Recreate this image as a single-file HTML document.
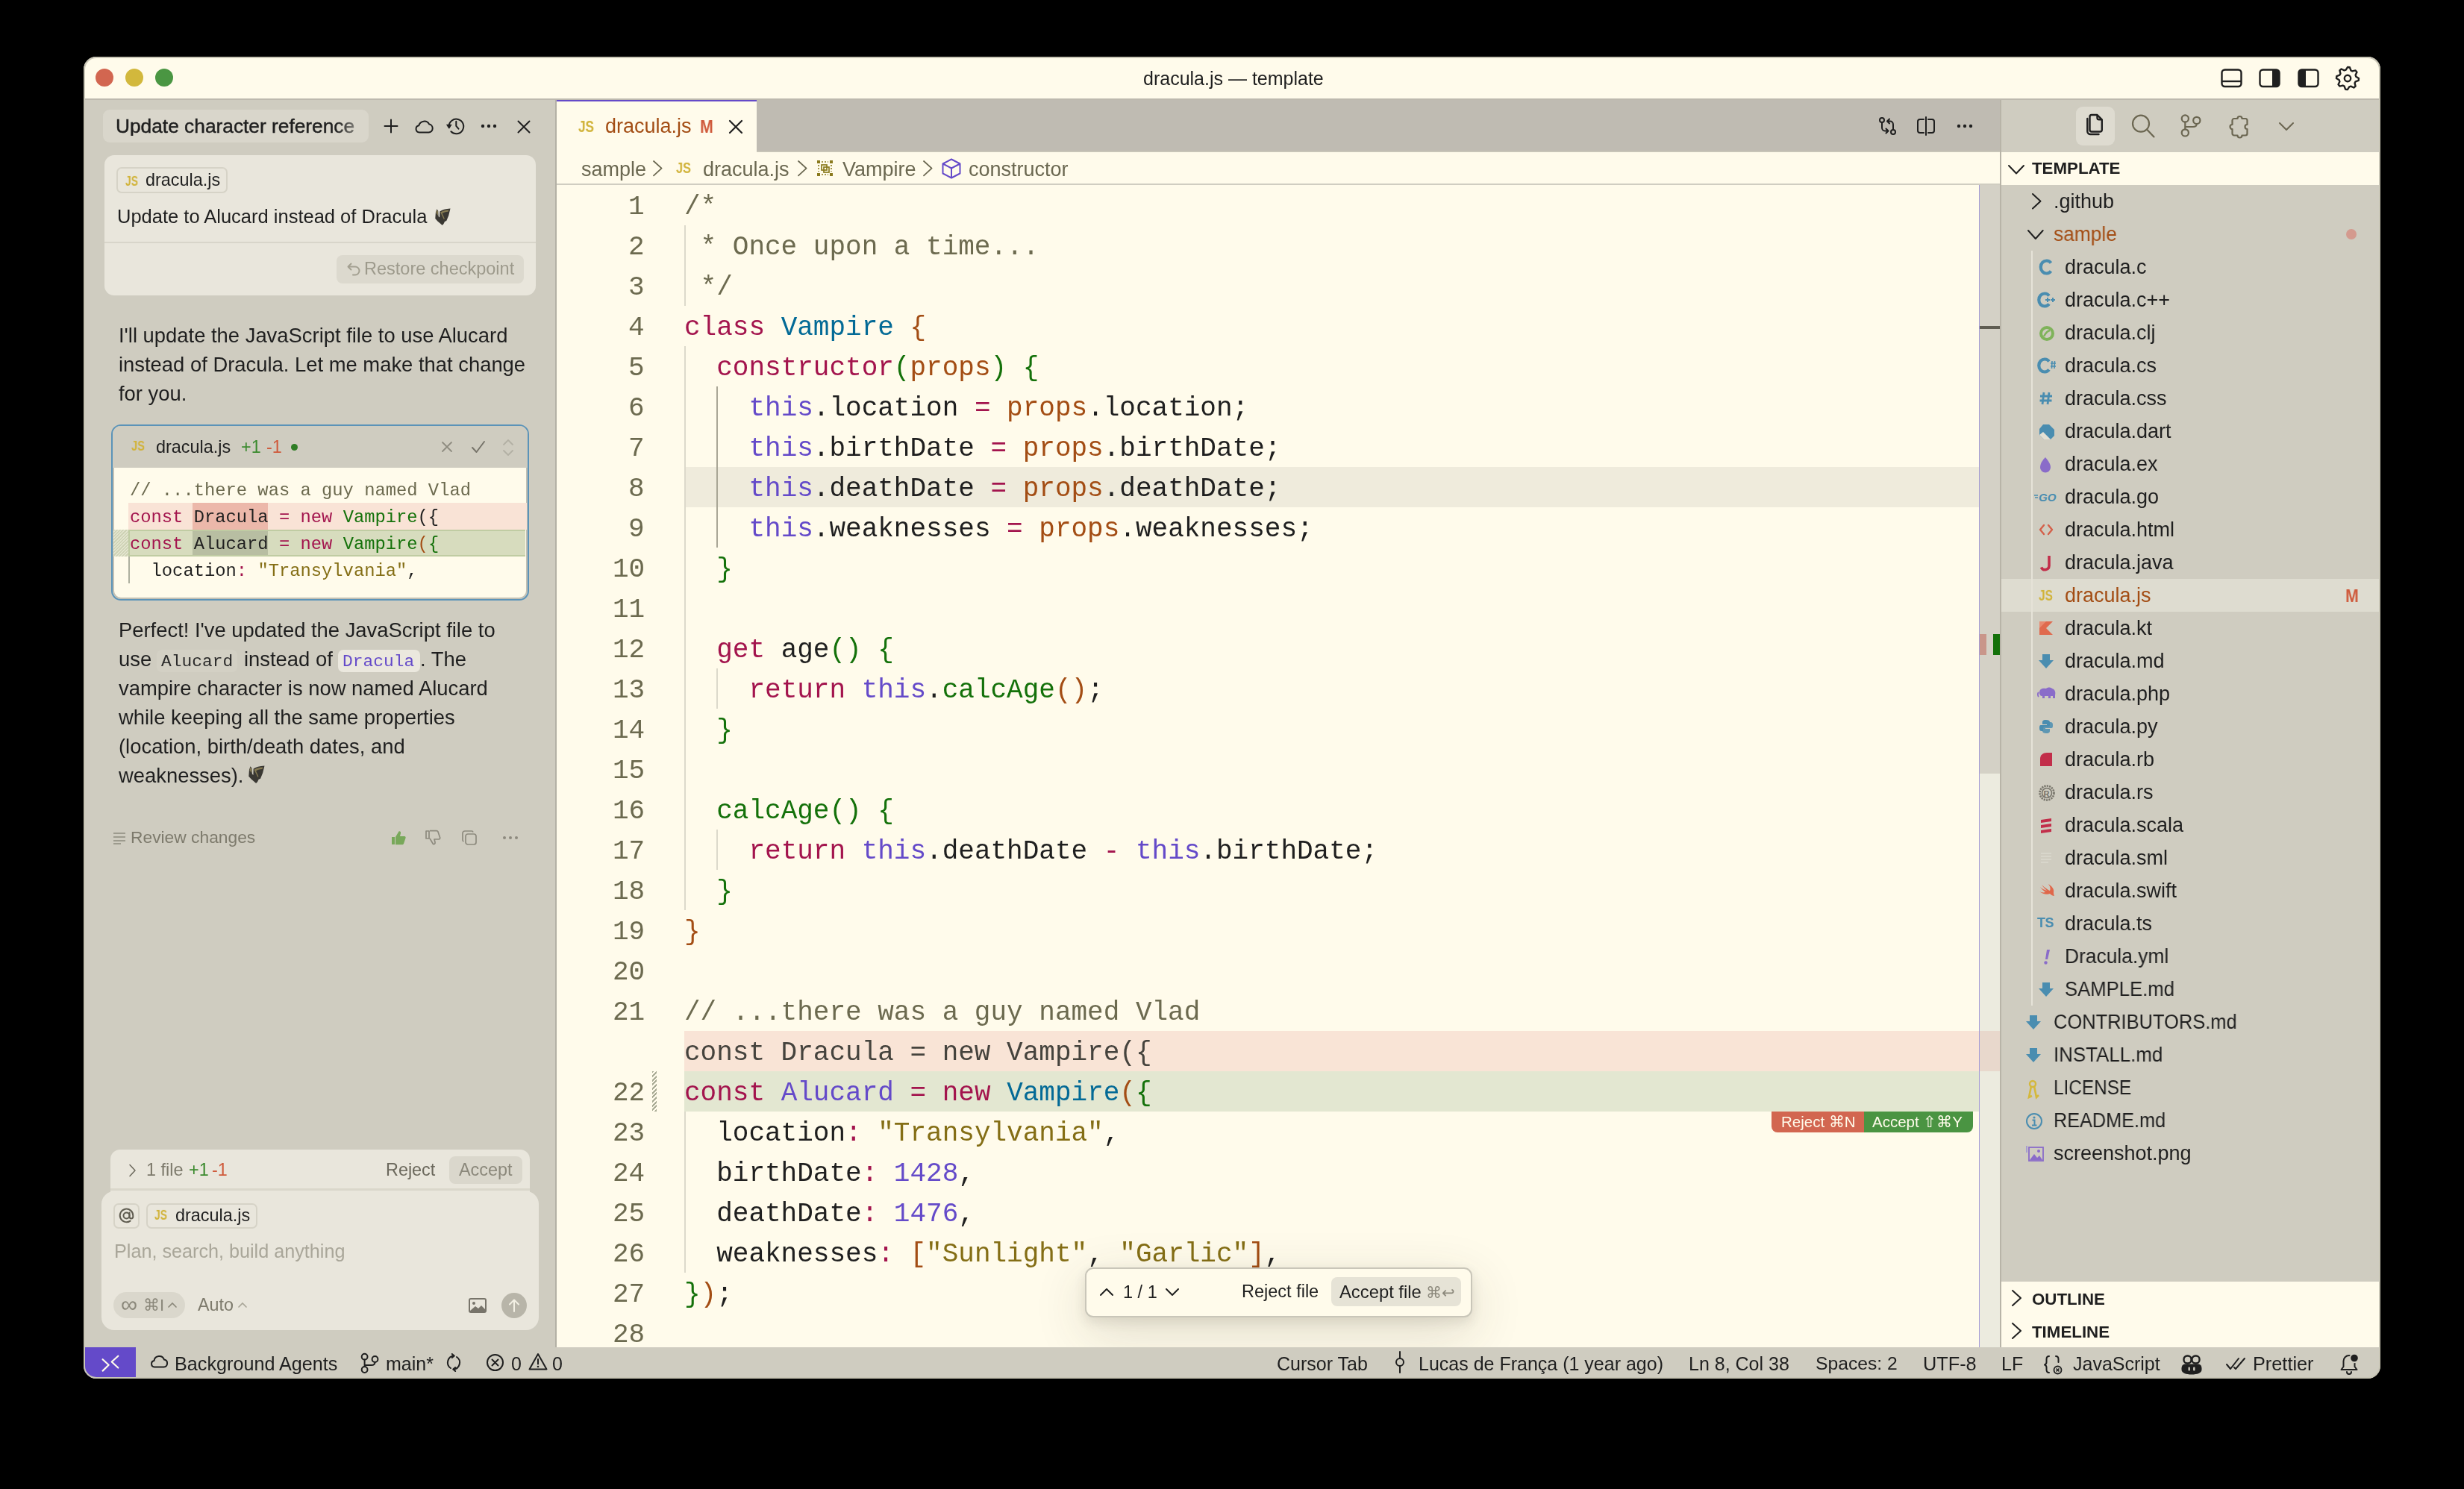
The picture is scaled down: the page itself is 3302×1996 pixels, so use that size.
<!DOCTYPE html>
<html><head><meta charset="utf-8">
<style>
html,body{margin:0;padding:0;background:#000;width:3302px;height:1996px;overflow:hidden;}
body{font-family:"Liberation Sans", sans-serif;-webkit-font-smoothing:antialiased;}
.t{position:absolute;white-space:pre;will-change:transform;}
.r{position:absolute;}
.s{position:absolute;overflow:visible;}
#win{position:absolute;left:112px;top:76px;width:3078px;height:1772px;border-radius:20px;overflow:hidden;background:#cfccc0;}
#win > div, #win > svg {}
</style></head><body>
<div class="r" style="left:112px;top:76px;width:3078px;height:1772px;background:#cfccc0;"></div>
<div class="r" style="left:112px;top:76px;width:3078px;height:56px;background:#fffbeb;"></div>
<div class="r" style="left:112px;top:132px;width:3078px;height:2px;background:#bdb9ae;"></div>
<div class="r" style="left:128px;top:92px;width:24px;height:24px;border-radius:50%;background:#d26650"></div>
<div class="r" style="left:168px;top:92px;width:24px;height:24px;border-radius:50%;background:#d2b83c"></div>
<div class="r" style="left:208px;top:92px;width:24px;height:24px;border-radius:50%;background:#4a9642"></div>
<div class="t" style="left:1532.0px;top:92.6px;font-size:25px;line-height:25px;color:#1f1f1f;">dracula.js — template</div>
<div class="r" style="left:744px;top:134px;width:2px;height:1672px;background:#b3b0a5;"></div>
<div class="r" style="left:138px;top:147px;width:356px;height:44px;border-radius:9px;background:#d9d6cb"></div>
<div class="t" style="left:155px;top:156.4px;font-size:26.3px;line-height:26px;color:#1f1f1f;width:335px;overflow:hidden;-webkit-text-stroke:0.45px #1f1f1f;-webkit-mask-image:linear-gradient(90deg,#000 88%,rgba(0,0,0,0.25) 100%)">Update character reference</div>
<svg class="s" style="left:512px;top:157px;" width="24" height="24" viewBox="0 0 24 24"><path d="M12 3.5 V20.5 M3.5 12 H20.5" stroke="#1f1f1f" stroke-width="2" fill="none" stroke-linecap="round" stroke-linejoin="round"/></svg>
<svg class="s" style="left:554px;top:157px;" width="28" height="24" viewBox="0 0 28 24"><path d="M8 20.5 H20.5 A5.5 5.5 0 0 0 21.2 9.6 A7.5 7.5 0 0 0 7.3 11.2 A4.7 4.7 0 0 0 8 20.5 Z" stroke="#1f1f1f" stroke-width="2" fill="none" stroke-linecap="round" stroke-linejoin="round"/></svg>
<svg class="s" style="left:598px;top:157px;" width="26" height="24" viewBox="0 0 26 24"><path d="M3.6 12.5 A9.8 9.8 0 1 1 6.4 19.3" stroke="#1f1f1f" stroke-width="2" fill="none" stroke-linecap="round" stroke-linejoin="round"/><path d="M0.6 10.2 L7 10.2 L3.8 15.2 Z" fill="#1f1f1f" stroke="#1f1f1f" stroke-width="1" stroke-linejoin="round"/><path d="M13.3 5.8 V11.8 L16.5 15.7" stroke="#1f1f1f" stroke-width="2" fill="none" stroke-linecap="round" stroke-linejoin="round"/></svg>
<svg class="s" style="left:644px;top:163px;" width="24" height="12" viewBox="0 0 24 12"><circle cx="3" cy="6" r="2.2" fill="#1f1f1f"/><circle cx="11" cy="6" r="2.2" fill="#1f1f1f"/><circle cx="19" cy="6" r="2.2" fill="#1f1f1f"/></svg>
<svg class="s" style="left:692px;top:160px;" width="20" height="20" viewBox="0 0 20 20"><path d="M2.5 2.5 L17.5 17.5 M17.5 2.5 L2.5 17.5" stroke="#1f1f1f" stroke-width="2" fill="none" stroke-linecap="round" stroke-linejoin="round"/></svg>
<div class="r" style="left:140px;top:208px;width:578px;height:188px;border-radius:13px;background:#e9e6dc"></div>
<div class="r" style="left:140px;top:324px;width:578px;height:2px;background:#d8d5ca;"></div>
<div class="r" style="left:156px;top:224px;width:145px;height:31px;border:2px solid #d6d3c7;border-radius:7px"></div>
<div class="t" style="left:167.5px;top:235.4px;font-size:16px;line-height:16px;font-weight:700;color:#d1b33a;letter-spacing:0px;transform:scale(0.86,1.1);transform-origin:0 0">JS</div>
<div class="t" style="left:194.6px;top:229.9px;font-size:23.4px;line-height:23.4px;color:#1f1f1f;">dracula.js</div>
<div class="t" style="left:157.0px;top:277.6px;font-size:25.5px;line-height:25.5px;color:#1f1f1f;">Update to Alucard instead of Dracula</div>
<svg class="s" style="left:582px;top:279px;" width="23" height="23" viewBox="0 0 23 23"><g transform="scale(1.045)"><path d="M1.2 13.5 L1.8 5.5 L3.2 1.2 L5 3.5 L5.4 10.5 L6.8 12 L7 4.2 C10 2.2 14.5 0.9 20.6 0.5 L19.6 4.5 L18.4 9.5 L15.6 16.2 L13.4 17.2 L12 20.2 L10.2 22 L7.6 19.6 L4.4 17 Z" fill="#3a3833"/><path d="M2.2 6 L3.3 2.2 L4.6 4.2 L4.8 9.5 Z" fill="#857a52"/><path d="M7.8 5.2 C11 3.4 15 2.4 18.6 2.4 L17.8 4.6 C14.5 4.6 11.8 5.6 10.2 6.8 L13.2 13.5 L12.4 14.6 Z" fill="#857a52"/></g></svg>
<div class="r" style="left:451px;top:342px;width:251px;height:38px;border-radius:8px;background:#dcd9ce"></div>
<svg class="s" style="left:462px;top:349px;" width="24" height="24" viewBox="0 0 24 24"><path d="M5 8.5 H14 A5.5 5.5 0 0 1 14 19.5 H11" stroke="#a3a091" stroke-width="2" fill="none" stroke-linecap="round" stroke-linejoin="round"/><path d="M8.5 4.5 L4.5 8.5 L8.5 12.5" stroke="#a3a091" stroke-width="2" fill="none" stroke-linecap="round" stroke-linejoin="round"/></svg>
<div class="t" style="left:488.4px;top:348.7px;font-size:23.5px;line-height:23.5px;color:#9d9a8c;">Restore checkpoint</div>
<div class="t" style="left:159.0px;top:435.8px;font-size:27.4px;line-height:27.4px;color:#1f1f1f;">I&#x27;ll update the JavaScript file to use Alucard</div>
<div class="t" style="left:159.0px;top:474.8px;font-size:27.4px;line-height:27.4px;color:#1f1f1f;">instead of Dracula. Let me make that change</div>
<div class="t" style="left:159.0px;top:513.8px;font-size:27.4px;line-height:27.4px;color:#1f1f1f;">for you.</div>
<div class="r" style="left:149px;top:569px;width:556px;height:232px;border:2px solid #5b93b8;border-radius:13px;background:#fffbeb;overflow:hidden;box-shadow:inset 0 0 0 2px #c3c0b4"><div style="position:absolute;left:0;top:0;right:0;height:56px;background:#cfccc0"></div></div>
<div class="t" style="left:175.5px;top:588.3px;font-size:17px;line-height:17px;font-weight:700;color:#d1b33a;letter-spacing:0px;transform:scale(0.86,1.1);transform-origin:0 0">JS</div>
<div class="t" style="left:208.7px;top:588.2px;font-size:23.4px;line-height:23.4px;color:#1f1f1f;">dracula.js</div>
<div class="t" style="left:323.0px;top:588.2px;font-size:23.4px;line-height:23.4px;color:#3b8a2e;">+1</div>
<div class="t" style="left:357.0px;top:588.2px;font-size:23.4px;line-height:23.4px;color:#cf5a3b;">-1</div>
<div class="r" style="left:390px;top:595px;width:9px;height:9px;border-radius:50%;background:#2f7d25"></div>
<svg class="s" style="left:589px;top:589px;" width="20" height="20" viewBox="0 0 20 20"><path d="M4 4 L16 16 M16 4 L4 16" stroke="#8f8c80" stroke-width="1.8" fill="none" stroke-linecap="round" stroke-linejoin="round"/></svg>
<svg class="s" style="left:629px;top:587px;" width="24" height="24" viewBox="0 0 24 24"><path d="M4 13 L9.5 19 L20 5" stroke="#77746a" stroke-width="2" fill="none" stroke-linecap="round" stroke-linejoin="round"/></svg>
<svg class="s" style="left:671px;top:587px;" width="20" height="26" viewBox="0 0 20 26"><path d="M4 9 L10 3 L16 9 M4 17 L10 23 L16 17" stroke="#b3b0a4" stroke-width="1.8" fill="none" stroke-linecap="round" stroke-linejoin="round"/></svg>
<div class="r" style="left:172px;top:674px;width:534px;height:36px;background:#f9e3d6;"></div>
<div class="r" style="left:258px;top:674px;width:101px;height:36px;background:#ecb8aa;"></div>
<div class="r" style="left:172px;top:710px;width:530px;height:32px;background:#d7dcbe;border:2px solid #c0cca3;border-right:none"></div>
<div class="r" style="left:152px;top:710px;width:20px;height:36px;background:repeating-linear-gradient(135deg,#cfd3b6 0 1.5px,#e3e5cf 1.5px 3px)"></div>
<div class="r" style="left:258px;top:712px;width:101px;height:32px;background:#b8bea2;"></div>
<div class="r" style="left:172px;top:746px;width:2px;height:36px;background:#aeb09f;"></div>
<div class="t" style="left:173.6px;top:645.8px;font-size:23.8px;line-height:23.8px;color:#1f1f1f;font-family:'Liberation Mono',monospace;"><span style="color:#6c6a4f">// ...there was a guy named Vlad</span></div>
<div class="t" style="left:173.6px;top:681.8px;font-size:23.8px;line-height:23.8px;color:#1f1f1f;font-family:'Liberation Mono',monospace;"><span style="color:#a3144d">const</span><span style="color:#1f1f1f"> Dracula </span><span style="color:#a3144d">=</span><span style="color:#1f1f1f"> </span><span style="color:#a3144d">new</span><span style="color:#1f1f1f"> </span><span style="color:#14710a">Vampire</span><span style="color:#1f1f1f">({</span></div>
<div class="t" style="left:173.6px;top:717.8px;font-size:23.8px;line-height:23.8px;color:#1f1f1f;font-family:'Liberation Mono',monospace;"><span style="color:#a3144d">const</span><span style="color:#1f1f1f"> Alucard </span><span style="color:#a3144d">=</span><span style="color:#1f1f1f"> </span><span style="color:#a3144d">new</span><span style="color:#1f1f1f"> </span><span style="color:#14710a">Vampire</span><span style="color:#a34d14">(</span><span style="color:#14710a">{</span></div>
<div class="t" style="left:173.6px;top:753.8px;font-size:23.8px;line-height:23.8px;color:#1f1f1f;font-family:'Liberation Mono',monospace;"><span style="color:#1f1f1f">  location</span><span style="color:#a3144d">:</span><span style="color:#1f1f1f"> </span><span style="color:#846e15">&quot;Transylvania&quot;</span><span style="color:#1f1f1f">,</span></div>
<div class="t" style="left:159.0px;top:830.8px;font-size:27.4px;line-height:27.4px;color:#1f1f1f;">Perfect! I&#x27;ve updated the JavaScript file to</div>
<div class="t" style="left:159.0px;top:908.8px;font-size:27.4px;line-height:27.4px;color:#1f1f1f;">vampire character is now named Alucard</div>
<div class="t" style="left:159.0px;top:947.8px;font-size:27.4px;line-height:27.4px;color:#1f1f1f;">while keeping all the same properties</div>
<div class="t" style="left:159.0px;top:986.8px;font-size:27.4px;line-height:27.4px;color:#1f1f1f;">(location, birth/death dates, and</div>
<div class="t" style="left:159.0px;top:1025.8px;font-size:27.4px;line-height:27.4px;color:#1f1f1f;">weaknesses).</div>
<div class="t" style="left:159.0px;top:869.8px;font-size:27.4px;line-height:27.4px;color:#1f1f1f;">use</div>
<div class="r" style="left:210px;top:871px;width:108px;height:30px;border-radius:7px;background:#d3d0c4"></div>
<div class="t" style="left:215.5px;top:875.5px;font-size:22.9px;line-height:22.9px;color:#2a2a2a;font-family:'Liberation Mono',monospace;">Alucard</div>
<div class="t" style="left:327.0px;top:869.8px;font-size:27.4px;line-height:27.4px;color:#1f1f1f;">instead of</div>
<div class="r" style="left:453px;top:871px;width:110px;height:30px;border-radius:7px;background:#ebe8de"></div>
<div class="t" style="left:458.5px;top:875.5px;font-size:22.9px;line-height:22.9px;color:#644ac9;font-family:'Liberation Mono',monospace;">Dracula</div>
<div class="t" style="left:562.5px;top:869.8px;font-size:27.4px;line-height:27.4px;color:#1f1f1f;">. The</div>
<svg class="s" style="left:332px;top:1026px;" width="24" height="24" viewBox="0 0 24 24"><g transform="scale(1.091)"><path d="M1.2 13.5 L1.8 5.5 L3.2 1.2 L5 3.5 L5.4 10.5 L6.8 12 L7 4.2 C10 2.2 14.5 0.9 20.6 0.5 L19.6 4.5 L18.4 9.5 L15.6 16.2 L13.4 17.2 L12 20.2 L10.2 22 L7.6 19.6 L4.4 17 Z" fill="#3a3833"/><path d="M2.2 6 L3.3 2.2 L4.6 4.2 L4.8 9.5 Z" fill="#857a52"/><path d="M7.8 5.2 C11 3.4 15 2.4 18.6 2.4 L17.8 4.6 C14.5 4.6 11.8 5.6 10.2 6.8 L13.2 13.5 L12.4 14.6 Z" fill="#857a52"/></g></svg>
<svg class="s" style="left:150px;top:1114px;" width="20" height="18" viewBox="0 0 20 18"><path d="M2 3 H18 M2 8 H18 M2 13 H18 M2 17 H12" stroke="#8d8a7e" stroke-width="1.6" fill="none"/></svg>
<div class="t" style="left:175.0px;top:1110.7px;font-size:22.8px;line-height:22.8px;color:#7d7a6c;">Review changes</div>
<svg class="s" style="left:522px;top:1111px;" width="24" height="24" viewBox="0 0 24 24"><path d="M3 11 H7 V21 H3 Z" fill="#78a85a"/><path d="M8 11 L12.5 3.5 C14 3 15.5 4 15 6 L14 10 H20 C21.5 10 22 11.5 21.5 12.5 L19 20 C18.5 21 17.8 21.3 17 21.3 H8 Z" fill="#78a85a"/></svg>
<svg class="s" style="left:568px;top:1111px;" width="24" height="24" viewBox="0 0 24 24"><path d="M7 13 V3 H3 V13 Z M8 13 L12.5 20.5 C14 21 15.5 20 15 18 L14 14 H20 C21.5 14 22 12.5 21.5 11.5 L19 4 C18.5 3 17.8 2.7 17 2.7 H8" stroke="#8d8a7e" stroke-width="1.7" fill="none" stroke-linejoin="round"/></svg>
<svg class="s" style="left:617px;top:1111px;" width="24" height="24" viewBox="0 0 24 24"><rect x="7" y="7" width="14" height="14" rx="3" stroke="#8d8a7e" stroke-width="1.7" fill="none"/><path d="M17 4.5 A2 2 0 0 0 15 3 H6 A3 3 0 0 0 3 6 V15 A2 2 0 0 0 4.5 17" stroke="#8d8a7e" stroke-width="1.7" fill="none"/></svg>
<svg class="s" style="left:673px;top:1117px;" width="24" height="12" viewBox="0 0 24 12"><circle cx="3" cy="6" r="2" fill="#8d8a7e"/><circle cx="11" cy="6" r="2" fill="#8d8a7e"/><circle cx="19" cy="6" r="2" fill="#8d8a7e"/></svg>
<div class="r" style="left:148px;top:1541px;width:562px;height:60px;border-radius:13px 13px 0 0;background:#e9e6dc"></div>
<div class="r" style="left:148px;top:1593px;width:562px;height:3px;background:#dad7cb;"></div>
<svg class="s" style="left:171px;top:1559px;" width="16" height="20" viewBox="0 0 16 20"><path d="M3 2.5 L10 10 L3 17.5" stroke="#6b685c" stroke-width="1.5" fill="none" stroke-linecap="round" stroke-linejoin="round"/></svg>
<div class="t" style="left:195.7px;top:1557.0px;font-size:23.4px;line-height:23.4px;color:#7d7a6c;">1 file</div>
<div class="t" style="left:253.0px;top:1557.0px;font-size:23.4px;line-height:23.4px;color:#3b8a2e;">+1</div>
<div class="t" style="left:284.0px;top:1557.0px;font-size:23.4px;line-height:23.4px;color:#cf5a3b;">-1</div>
<div class="t" style="left:516.5px;top:1557.0px;font-size:23.4px;line-height:23.4px;color:#6b685c;">Reject</div>
<div class="r" style="left:602px;top:1550px;width:98px;height:37px;border-radius:8px;background:#dad7cc"></div>
<div class="t" style="left:615.0px;top:1557.0px;font-size:23.4px;line-height:23.4px;color:#8b887b;">Accept</div>
<div class="r" style="left:136px;top:1597px;width:586px;height:186px;border-radius:17px;background:#e9e6dc"></div>
<div class="r" style="left:152px;top:1613px;width:31px;height:30px;border:2px solid #d6d3c7;border-radius:7px"></div>
<svg class="s" style="left:159px;top:1619px;" width="22" height="22" viewBox="0 0 22 22"><circle cx="10.5" cy="10.5" r="4" stroke="#5f5c50" stroke-width="2" fill="none"/><path d="M14.5 6.5 V12 A2.4 2.4 0 0 0 19.3 12 V10.5 A8.8 8.8 0 1 0 15.6 17.6" stroke="#5f5c50" stroke-width="2" fill="none" stroke-linecap="round"/></svg>
<div class="r" style="left:196px;top:1613px;width:145px;height:30px;border:2px solid #d6d3c7;border-radius:7px"></div>
<div class="t" style="left:206.5px;top:1621.4px;font-size:16px;line-height:16px;font-weight:700;color:#d1b33a;letter-spacing:0px;transform:scale(0.86,1.1);transform-origin:0 0">JS</div>
<div class="t" style="left:234.7px;top:1617.5px;font-size:23.4px;line-height:23.4px;color:#1f1f1f;">dracula.js</div>
<div class="t" style="left:153.0px;top:1665.3px;font-size:25.2px;line-height:25.2px;color:#a9a699;">Plan, search, build anything</div>
<div class="r" style="left:152px;top:1732px;width:96px;height:35px;border-radius:18px;background:#dad7cc"></div>
<div class="t" style="left:162.0px;top:1733.3px;font-size:31px;line-height:31px;color:#8b887b;">∞</div>
<div class="t" style="left:192.0px;top:1739.4px;font-size:22px;line-height:22px;color:#8b887b;">⌘I</div>
<svg class="s" style="left:223px;top:1743px;" width="16" height="12" viewBox="0 0 16 12"><path d="M3 9 L8 4 L13 9" stroke="#8b887b" stroke-width="1.7" fill="none" stroke-linecap="round"/></svg>
<div class="t" style="left:264.5px;top:1738.3px;font-size:23.3px;line-height:23.3px;color:#7d7a6c;">Auto</div>
<svg class="s" style="left:317px;top:1743px;" width="16" height="12" viewBox="0 0 16 12"><path d="M3 9 L8 4 L13 9" stroke="#a9a699" stroke-width="1.7" fill="none" stroke-linecap="round"/></svg>
<svg class="s" style="left:627px;top:1739px;" width="26" height="22" viewBox="0 0 26 22"><rect x="2" y="2" width="22" height="18" rx="2" stroke="#77746a" stroke-width="2" fill="none"/><circle cx="8" cy="8" r="2" fill="#77746a"/><path d="M3 18 L10 12 L14 15 L18 11 L23 16 V19 H3 Z" fill="#77746a"/></svg>
<div class="r" style="left:672px;top:1733px;width:34px;height:34px;border-radius:50%;background:#b8b5a9"></div>
<svg class="s" style="left:675px;top:1736px;" width="28" height="28" viewBox="0 0 28 28"><path d="M14 22 V7 M8 12.5 L14 6.5 L20 12.5" stroke="#f3f0e4" stroke-width="2" fill="none" stroke-linecap="round" stroke-linejoin="round"/></svg>
<div class="r" style="left:746px;top:134px;width:1935px;height:68px;background:#bfbbb2;"></div>
<div class="r" style="left:746px;top:202px;width:1935px;height:2px;background:#c8c5b8;"></div>
<div class="r" style="left:746px;top:134px;width:268px;height:70px;background:#fffbeb;"></div>
<div class="r" style="left:746px;top:134px;width:268px;height:2px;background:#644ac9;"></div>
<div class="r" style="left:746px;top:204px;width:1935px;height:42px;background:#fffbeb;"></div>
<div class="r" style="left:746px;top:246px;width:1935px;height:2px;background:#d0cdc1;"></div>
<div class="r" style="left:746px;top:248px;width:1935px;height:1558px;background:#fffbeb;"></div>
<div class="t" style="left:775.0px;top:157.8px;font-size:20px;line-height:20px;font-weight:700;color:#d1b33a;letter-spacing:0px;transform:scale(0.86,1.1);transform-origin:0 0">JS</div>
<div class="t" style="left:811.0px;top:156.4px;font-size:27px;line-height:27px;color:#a34d14;">dracula.js</div>
<div class="t" style="left:938.3px;top:158.0px;font-size:24px;line-height:24px;color:#cf5a3b;font-weight:700;transform:scaleX(0.89);transform-origin:0 0;">M</div>
<svg class="s" style="left:974px;top:160px;" width="24" height="20" viewBox="0 0 24 20"><path d="M4 2 L20 18 M20 2 L4 18" stroke="#1f1f1f" stroke-width="2.2" fill="none" stroke-linecap="round"/></svg>
<svg class="s" style="left:2515px;top:155px;" width="28" height="28" viewBox="0 0 28 28"><circle cx="7" cy="6" r="3" stroke="#1f1f1f" stroke-width="2" fill="none" stroke-linecap="round" stroke-linejoin="round"/><circle cx="22" cy="22" r="3" stroke="#1f1f1f" stroke-width="2" fill="none" stroke-linecap="round" stroke-linejoin="round"/><path d="M7 9 V16 C7 19 9 20.5 11 20.5 H15 M12.5 17.5 L15.5 20.5 L12.5 23.5" stroke="#1f1f1f" stroke-width="2" fill="none" stroke-linecap="round" stroke-linejoin="round"/><path d="M22 19 V12 C22 9 20 7.5 18 7.5 H14.5 M17 4.5 L14 7.5 L17 10.5" stroke="#1f1f1f" stroke-width="2" fill="none" stroke-linecap="round" stroke-linejoin="round"/></svg>
<svg class="s" style="left:2567px;top:155px;" width="28" height="28" viewBox="0 0 28 28"><path d="M11 5 H6 A3 3 0 0 0 3 8 V20 A3 3 0 0 0 6 23 H11 M17 5 H22 A3 3 0 0 1 25 8 V20 A3 3 0 0 1 22 23 H17 M14 2 V26" stroke="#1f1f1f" stroke-width="2" fill="none" stroke-linecap="round" stroke-linejoin="round"/></svg>
<svg class="s" style="left:2622px;top:163px;" width="24" height="12" viewBox="0 0 24 12"><circle cx="3" cy="6" r="2.2" fill="#1f1f1f"/><circle cx="11" cy="6" r="2.2" fill="#1f1f1f"/><circle cx="19" cy="6" r="2.2" fill="#1f1f1f"/></svg>
<div class="t" style="left:778.6px;top:214.1px;font-size:27px;line-height:27px;color:#6b6851;">sample</div>
<svg class="s" style="left:874.3px;top:214.3px;" width="14" height="23.4" viewBox="0 0 14 23.4"><path d="M2 2 L12.6 11.7 L2 21.4" stroke="#6b6851" stroke-width="1.8" fill="none" stroke-linecap="round" stroke-linejoin="round"/></svg>
<div class="t" style="left:906.1px;top:214.0px;font-size:19px;line-height:19px;font-weight:700;color:#d1b33a;letter-spacing:0px;transform:scale(0.86,1.1);transform-origin:0 0">JS</div>
<div class="t" style="left:942.0px;top:214.1px;font-size:27px;line-height:27px;color:#6b6851;">dracula.js</div>
<svg class="s" style="left:1068px;top:214.3px;" width="14" height="23.4" viewBox="0 0 14 23.4"><path d="M2 2 L12.6 11.7 L2 21.4" stroke="#6b6851" stroke-width="1.8" fill="none" stroke-linecap="round" stroke-linejoin="round"/></svg>
<svg class="s" style="left:1093px;top:213px;" width="26" height="26" viewBox="0 0 26 26"><g fill="#8a7a1e"><rect x="2" y="2" width="4" height="4"/><rect x="19" y="2" width="4" height="4"/><rect x="2" y="19" width="4" height="4"/><rect x="19" y="19" width="4" height="4"/></g><path d="M4 8 V17 M21 8 V17 M8 4 H17 M8 21 H17" stroke="#8a7a1e" stroke-width="1.6" stroke-dasharray="2 2"/><rect x="8" y="8" width="7" height="7" stroke="#8a7a1e" stroke-width="1.7" fill="none"/><rect x="11" y="11" width="7" height="7" stroke="#8a7a1e" stroke-width="1.7" fill="none"/></svg>
<div class="t" style="left:1129.0px;top:214.1px;font-size:27px;line-height:27px;color:#6b6851;">Vampire</div>
<svg class="s" style="left:1236px;top:214.3px;" width="14" height="23.4" viewBox="0 0 14 23.4"><path d="M2 2 L12.6 11.7 L2 21.4" stroke="#6b6851" stroke-width="1.8" fill="none" stroke-linecap="round" stroke-linejoin="round"/></svg>
<svg class="s" style="left:1260px;top:211px;" width="30" height="30" viewBox="0 0 30 30"><path d="M15 2.5 L26.5 8.5 V21.5 L15 27.5 L3.5 21.5 V8.5 Z M3.5 8.5 L15 14.5 L26.5 8.5 M15 14.5 V27.5" stroke="#644ac9" stroke-width="2" fill="none" stroke-linejoin="round"/></svg>
<div class="t" style="left:1297.7px;top:214.1px;font-size:27px;line-height:27px;color:#6b6851;">constructor</div>
<div class="r" style="left:917px;top:626px;width:1735px;height:54px;background:#efebdc;"></div>
<div class="r" style="left:917px;top:1382px;width:1735px;height:54px;background:#f9e4d6;"></div>
<div class="r" style="left:917px;top:1436px;width:1735px;height:54px;background:#e3e7d1;"></div>
<div class="r" style="left:874px;top:1436px;width:6px;height:54px;background:repeating-linear-gradient(135deg,#a9ab95 0 2px,transparent 2px 4px)"></div>
<div class="r" style="left:917px;top:302px;width:2px;height:108px;background:#dcd9cb;"></div>
<div class="r" style="left:917px;top:464px;width:2px;height:756px;background:#dcd9cb;"></div>
<div class="r" style="left:960px;top:518px;width:2px;height:216px;background:#a9a696;"></div>
<div class="r" style="left:960px;top:896px;width:2px;height:54px;background:#dcd9cb;"></div>
<div class="r" style="left:960px;top:1112px;width:2px;height:54px;background:#dcd9cb;"></div>
<div class="r" style="left:917px;top:1490px;width:2px;height:216px;background:#dcd9cb;"></div>
<div class="t" style="left:842.4px;top:259.8px;font-size:36px;line-height:36px;color:#6c6a4f;font-family:'Liberation Mono',monospace;">1</div>
<div class="t" style="left:917.0px;top:259.8px;font-size:36px;line-height:36px;color:#1f1f1f;font-family:'Liberation Mono',monospace;"><span style="color:#6c6a4f">/*</span></div>
<div class="t" style="left:842.4px;top:313.8px;font-size:36px;line-height:36px;color:#6c6a4f;font-family:'Liberation Mono',monospace;">2</div>
<div class="t" style="left:917.0px;top:313.8px;font-size:36px;line-height:36px;color:#1f1f1f;font-family:'Liberation Mono',monospace;"><span style="color:#6c6a4f"> * Once upon a time...</span></div>
<div class="t" style="left:842.4px;top:367.8px;font-size:36px;line-height:36px;color:#6c6a4f;font-family:'Liberation Mono',monospace;">3</div>
<div class="t" style="left:917.0px;top:367.8px;font-size:36px;line-height:36px;color:#1f1f1f;font-family:'Liberation Mono',monospace;"><span style="color:#6c6a4f"> */</span></div>
<div class="t" style="left:842.4px;top:421.8px;font-size:36px;line-height:36px;color:#6c6a4f;font-family:'Liberation Mono',monospace;">4</div>
<div class="t" style="left:917.0px;top:421.8px;font-size:36px;line-height:36px;color:#1f1f1f;font-family:'Liberation Mono',monospace;"><span style="color:#a3144d">class</span><span style="color:#1f1f1f"> </span><span style="color:#036a96">Vampire</span><span style="color:#1f1f1f"> </span><span style="color:#a34d14">{</span></div>
<div class="t" style="left:842.4px;top:475.8px;font-size:36px;line-height:36px;color:#6c6a4f;font-family:'Liberation Mono',monospace;">5</div>
<div class="t" style="left:917.0px;top:475.8px;font-size:36px;line-height:36px;color:#1f1f1f;font-family:'Liberation Mono',monospace;"><span style="color:#1f1f1f">  </span><span style="color:#a3144d">constructor</span><span style="color:#14710a">(</span><span style="color:#a34d14">props</span><span style="color:#14710a">)</span><span style="color:#1f1f1f"> </span><span style="color:#14710a">{</span></div>
<div class="t" style="left:842.4px;top:529.8px;font-size:36px;line-height:36px;color:#6c6a4f;font-family:'Liberation Mono',monospace;">6</div>
<div class="t" style="left:917.0px;top:529.8px;font-size:36px;line-height:36px;color:#1f1f1f;font-family:'Liberation Mono',monospace;"><span style="color:#1f1f1f">    </span><span style="color:#644ac9">this</span><span style="color:#1f1f1f">.location </span><span style="color:#a3144d">=</span><span style="color:#1f1f1f"> </span><span style="color:#a34d14">props</span><span style="color:#1f1f1f">.location;</span></div>
<div class="t" style="left:842.4px;top:583.8px;font-size:36px;line-height:36px;color:#6c6a4f;font-family:'Liberation Mono',monospace;">7</div>
<div class="t" style="left:917.0px;top:583.8px;font-size:36px;line-height:36px;color:#1f1f1f;font-family:'Liberation Mono',monospace;"><span style="color:#1f1f1f">    </span><span style="color:#644ac9">this</span><span style="color:#1f1f1f">.birthDate </span><span style="color:#a3144d">=</span><span style="color:#1f1f1f"> </span><span style="color:#a34d14">props</span><span style="color:#1f1f1f">.birthDate;</span></div>
<div class="t" style="left:842.4px;top:637.8px;font-size:36px;line-height:36px;color:#6c6a4f;font-family:'Liberation Mono',monospace;">8</div>
<div class="t" style="left:917.0px;top:637.8px;font-size:36px;line-height:36px;color:#1f1f1f;font-family:'Liberation Mono',monospace;"><span style="color:#1f1f1f">    </span><span style="color:#644ac9">this</span><span style="color:#1f1f1f">.deathDate </span><span style="color:#a3144d">=</span><span style="color:#1f1f1f"> </span><span style="color:#a34d14">props</span><span style="color:#1f1f1f">.deathDate;</span></div>
<div class="t" style="left:842.4px;top:691.8px;font-size:36px;line-height:36px;color:#6c6a4f;font-family:'Liberation Mono',monospace;">9</div>
<div class="t" style="left:917.0px;top:691.8px;font-size:36px;line-height:36px;color:#1f1f1f;font-family:'Liberation Mono',monospace;"><span style="color:#1f1f1f">    </span><span style="color:#644ac9">this</span><span style="color:#1f1f1f">.weaknesses </span><span style="color:#a3144d">=</span><span style="color:#1f1f1f"> </span><span style="color:#a34d14">props</span><span style="color:#1f1f1f">.weaknesses;</span></div>
<div class="t" style="left:820.8px;top:745.8px;font-size:36px;line-height:36px;color:#6c6a4f;font-family:'Liberation Mono',monospace;">10</div>
<div class="t" style="left:917.0px;top:745.8px;font-size:36px;line-height:36px;color:#1f1f1f;font-family:'Liberation Mono',monospace;"><span style="color:#1f1f1f">  </span><span style="color:#14710a">}</span></div>
<div class="t" style="left:820.8px;top:799.8px;font-size:36px;line-height:36px;color:#6c6a4f;font-family:'Liberation Mono',monospace;">11</div>
<div class="t" style="left:820.8px;top:853.8px;font-size:36px;line-height:36px;color:#6c6a4f;font-family:'Liberation Mono',monospace;">12</div>
<div class="t" style="left:917.0px;top:853.8px;font-size:36px;line-height:36px;color:#1f1f1f;font-family:'Liberation Mono',monospace;"><span style="color:#1f1f1f">  </span><span style="color:#a3144d">get</span><span style="color:#1f1f1f"> age</span><span style="color:#14710a">()</span><span style="color:#1f1f1f"> </span><span style="color:#14710a">{</span></div>
<div class="t" style="left:820.8px;top:907.8px;font-size:36px;line-height:36px;color:#6c6a4f;font-family:'Liberation Mono',monospace;">13</div>
<div class="t" style="left:917.0px;top:907.8px;font-size:36px;line-height:36px;color:#1f1f1f;font-family:'Liberation Mono',monospace;"><span style="color:#1f1f1f">    </span><span style="color:#a3144d">return</span><span style="color:#1f1f1f"> </span><span style="color:#644ac9">this</span><span style="color:#1f1f1f">.</span><span style="color:#14710a">calcAge</span><span style="color:#a34d14">()</span><span style="color:#1f1f1f">;</span></div>
<div class="t" style="left:820.8px;top:961.8px;font-size:36px;line-height:36px;color:#6c6a4f;font-family:'Liberation Mono',monospace;">14</div>
<div class="t" style="left:917.0px;top:961.8px;font-size:36px;line-height:36px;color:#1f1f1f;font-family:'Liberation Mono',monospace;"><span style="color:#1f1f1f">  </span><span style="color:#14710a">}</span></div>
<div class="t" style="left:820.8px;top:1015.8px;font-size:36px;line-height:36px;color:#6c6a4f;font-family:'Liberation Mono',monospace;">15</div>
<div class="t" style="left:820.8px;top:1069.8px;font-size:36px;line-height:36px;color:#6c6a4f;font-family:'Liberation Mono',monospace;">16</div>
<div class="t" style="left:917.0px;top:1069.8px;font-size:36px;line-height:36px;color:#1f1f1f;font-family:'Liberation Mono',monospace;"><span style="color:#1f1f1f">  </span><span style="color:#14710a">calcAge</span><span style="color:#14710a">()</span><span style="color:#1f1f1f"> </span><span style="color:#14710a">{</span></div>
<div class="t" style="left:820.8px;top:1123.8px;font-size:36px;line-height:36px;color:#6c6a4f;font-family:'Liberation Mono',monospace;">17</div>
<div class="t" style="left:917.0px;top:1123.8px;font-size:36px;line-height:36px;color:#1f1f1f;font-family:'Liberation Mono',monospace;"><span style="color:#1f1f1f">    </span><span style="color:#a3144d">return</span><span style="color:#1f1f1f"> </span><span style="color:#644ac9">this</span><span style="color:#1f1f1f">.deathDate </span><span style="color:#a3144d">-</span><span style="color:#1f1f1f"> </span><span style="color:#644ac9">this</span><span style="color:#1f1f1f">.birthDate;</span></div>
<div class="t" style="left:820.8px;top:1177.8px;font-size:36px;line-height:36px;color:#6c6a4f;font-family:'Liberation Mono',monospace;">18</div>
<div class="t" style="left:917.0px;top:1177.8px;font-size:36px;line-height:36px;color:#1f1f1f;font-family:'Liberation Mono',monospace;"><span style="color:#1f1f1f">  </span><span style="color:#14710a">}</span></div>
<div class="t" style="left:820.8px;top:1231.8px;font-size:36px;line-height:36px;color:#6c6a4f;font-family:'Liberation Mono',monospace;">19</div>
<div class="t" style="left:917.0px;top:1231.8px;font-size:36px;line-height:36px;color:#1f1f1f;font-family:'Liberation Mono',monospace;"><span style="color:#a34d14">}</span></div>
<div class="t" style="left:820.8px;top:1285.8px;font-size:36px;line-height:36px;color:#6c6a4f;font-family:'Liberation Mono',monospace;">20</div>
<div class="t" style="left:820.8px;top:1339.8px;font-size:36px;line-height:36px;color:#6c6a4f;font-family:'Liberation Mono',monospace;">21</div>
<div class="t" style="left:917.0px;top:1339.8px;font-size:36px;line-height:36px;color:#1f1f1f;font-family:'Liberation Mono',monospace;"><span style="color:#6c6a4f">// ...there was a guy named Vlad</span></div>
<div class="t" style="left:917.0px;top:1393.8px;font-size:36px;line-height:36px;color:#1f1f1f;font-family:'Liberation Mono',monospace;"><span style="color:#45433d">const Dracula = new Vampire({</span></div>
<div class="t" style="left:820.8px;top:1447.8px;font-size:36px;line-height:36px;color:#6c6a4f;font-family:'Liberation Mono',monospace;">22</div>
<div class="t" style="left:917.0px;top:1447.8px;font-size:36px;line-height:36px;color:#1f1f1f;font-family:'Liberation Mono',monospace;"><span style="color:#a3144d">const</span><span style="color:#1f1f1f"> </span><span style="color:#644ac9">Alucard</span><span style="color:#1f1f1f"> </span><span style="color:#a3144d">=</span><span style="color:#1f1f1f"> </span><span style="color:#a3144d">new</span><span style="color:#1f1f1f"> </span><span style="color:#036a96">Vampire</span><span style="color:#a34d14">(</span><span style="color:#14710a">{</span></div>
<div class="t" style="left:820.8px;top:1501.8px;font-size:36px;line-height:36px;color:#6c6a4f;font-family:'Liberation Mono',monospace;">23</div>
<div class="t" style="left:917.0px;top:1501.8px;font-size:36px;line-height:36px;color:#1f1f1f;font-family:'Liberation Mono',monospace;"><span style="color:#1f1f1f">  location</span><span style="color:#a3144d">:</span><span style="color:#1f1f1f"> </span><span style="color:#846e15">&quot;Transylvania&quot;</span><span style="color:#1f1f1f">,</span></div>
<div class="t" style="left:820.8px;top:1555.8px;font-size:36px;line-height:36px;color:#6c6a4f;font-family:'Liberation Mono',monospace;">24</div>
<div class="t" style="left:917.0px;top:1555.8px;font-size:36px;line-height:36px;color:#1f1f1f;font-family:'Liberation Mono',monospace;"><span style="color:#1f1f1f">  birthDate</span><span style="color:#a3144d">:</span><span style="color:#1f1f1f"> </span><span style="color:#644ac9">1428</span><span style="color:#1f1f1f">,</span></div>
<div class="t" style="left:820.8px;top:1609.8px;font-size:36px;line-height:36px;color:#6c6a4f;font-family:'Liberation Mono',monospace;">25</div>
<div class="t" style="left:917.0px;top:1609.8px;font-size:36px;line-height:36px;color:#1f1f1f;font-family:'Liberation Mono',monospace;"><span style="color:#1f1f1f">  deathDate</span><span style="color:#a3144d">:</span><span style="color:#1f1f1f"> </span><span style="color:#644ac9">1476</span><span style="color:#1f1f1f">,</span></div>
<div class="t" style="left:820.8px;top:1663.8px;font-size:36px;line-height:36px;color:#6c6a4f;font-family:'Liberation Mono',monospace;">26</div>
<div class="t" style="left:917.0px;top:1663.8px;font-size:36px;line-height:36px;color:#1f1f1f;font-family:'Liberation Mono',monospace;"><span style="color:#1f1f1f">  weaknesses</span><span style="color:#a3144d">:</span><span style="color:#1f1f1f"> </span><span style="color:#a34d14">[</span><span style="color:#846e15">&quot;Sunlight&quot;</span><span style="color:#1f1f1f">, </span><span style="color:#846e15">&quot;Garlic&quot;</span><span style="color:#a34d14">]</span><span style="color:#1f1f1f">,</span></div>
<div class="t" style="left:820.8px;top:1717.8px;font-size:36px;line-height:36px;color:#6c6a4f;font-family:'Liberation Mono',monospace;">27</div>
<div class="t" style="left:917.0px;top:1717.8px;font-size:36px;line-height:36px;color:#1f1f1f;font-family:'Liberation Mono',monospace;"><span style="color:#14710a">}</span><span style="color:#a34d14">)</span><span style="color:#1f1f1f">;</span></div>
<div class="t" style="left:820.8px;top:1771.8px;font-size:36px;line-height:36px;color:#6c6a4f;font-family:'Liberation Mono',monospace;">28</div>
<div class="r" style="left:2652px;top:248px;width:1px;height:1558px;background:#a59cd6;"></div>
<div class="r" style="left:2653px;top:248px;width:27px;height:1558px;background:#ecebdf;"></div>
<div class="r" style="left:2653px;top:248px;width:27px;height:789px;background:#d4d1c6;"></div>
<div class="r" style="left:2653px;top:437px;width:27px;height:4px;background:#5f5d52;"></div>
<div class="r" style="left:2653px;top:850px;width:9px;height:28px;background:#c9968a;"></div>
<div class="r" style="left:2671px;top:850px;width:9px;height:28px;background:#14710a;"></div>
<div class="r" style="left:2653px;top:1382px;width:27px;height:54px;background:#e8d8cc;"></div>
<div class="r" style="left:2374px;top:1490px;width:124px;height:28px;border-radius:0 0 0 8px;background:#d26650"></div>
<div class="r" style="left:2498px;top:1490px;width:146px;height:28px;border-radius:0 0 8px 0;background:#4a9442"></div>
<div class="t" style="left:2386.6px;top:1493.6px;font-size:20.5px;line-height:20.5px;color:#fffbeb;">Reject ⌘N</div>
<div class="t" style="left:2509.0px;top:1493.6px;font-size:20.5px;line-height:20.5px;color:#fffbeb;">Accept ⇧⌘Y</div>
<div class="r" style="left:1454px;top:1699px;width:515px;height:63px;border:2px solid #c9c6b9;border-radius:11px;background:#fffbeb;box-shadow:0 6px 16px rgba(60,55,40,0.12), 0 20px 70px rgba(60,55,40,0.16)"></div>
<svg class="s" style="left:1472px;top:1724px;" width="22" height="16" viewBox="0 0 22 16"><path d="M3 12 L11 4 L19 12" stroke="#1f1f1f" stroke-width="2" fill="none" stroke-linecap="round" stroke-linejoin="round"/></svg>
<div class="t" style="left:1504.7px;top:1721.1px;font-size:23.5px;line-height:23.5px;color:#1f1f1f;">1 / 1</div>
<svg class="s" style="left:1560px;top:1724px;" width="22" height="16" viewBox="0 0 22 16"><path d="M3 4 L11 12 L19 4" stroke="#1f1f1f" stroke-width="2" fill="none" stroke-linecap="round" stroke-linejoin="round"/></svg>
<div class="t" style="left:1664.0px;top:1720.1px;font-size:23.5px;line-height:23.5px;color:#1f1f1f;">Reject file</div>
<div class="r" style="left:1784px;top:1712px;width:174px;height:39px;border-radius:8px;background:#e6e3d6"></div>
<div class="t" style="left:1795.0px;top:1719.8px;font-size:23.8px;line-height:23.8px;color:#1f1f1f;">Accept file</div>
<div class="t" style="left:1911.0px;top:1722.2px;font-size:21px;line-height:21px;color:#8b887b;">⌘↩</div>
<div class="r" style="left:2680px;top:134px;width:2px;height:1672px;background:#b8b4a8;"></div>
<div class="r" style="left:2682px;top:204px;width:508px;height:44px;background:#fffbeb;"></div>
<div class="r" style="left:2682px;top:1718px;width:508px;height:88px;background:#fffbeb;"></div>
<div class="r" style="left:2782px;top:143px;width:52px;height:52px;border-radius:9px;background:#dedbd0"></div>
<svg class="s" style="left:2794px;top:150px;" width="32" height="36" viewBox="0 0 32 36"><path d="M9 4 H16.5 L22.8 10.3 V24 A2.5 2.5 0 0 1 20.3 26.5 H9 A2.5 2.5 0 0 1 6.5 24 V6.5 A2.5 2.5 0 0 1 9 4 Z M16.5 4 V8 A2.3 2.3 0 0 0 18.8 10.3 H22.8" stroke="#1f1f1f" stroke-width="2.4" fill="none" stroke-linejoin="round"/><path d="M3.3 9 V26 A4 4 0 0 0 7.3 30 H18.5" stroke="#1f1f1f" stroke-width="2.4" fill="none" stroke-linecap="round"/></svg>
<svg class="s" style="left:2852px;top:150px;" width="40" height="40" viewBox="0 0 40 40"><circle cx="17" cy="15.7" r="11" stroke="#6b6651" stroke-width="2.2" fill="none" stroke-linecap="round" stroke-linejoin="round"/><path d="M25.5 24 L34.5 33.4" stroke="#6b6651" stroke-width="2.2" fill="none" stroke-linecap="round" stroke-linejoin="round"/></svg>
<svg class="s" style="left:2918px;top:150px;" width="36" height="36" viewBox="0 0 36 36"><circle cx="10.3" cy="9" r="4.6" stroke="#6b6651" stroke-width="2.2" fill="none" stroke-linecap="round" stroke-linejoin="round"/><circle cx="10.3" cy="27.9" r="4.6" stroke="#6b6651" stroke-width="2.2" fill="none" stroke-linecap="round" stroke-linejoin="round"/><circle cx="25.8" cy="11.4" r="4.6" stroke="#6b6651" stroke-width="2.2" fill="none" stroke-linecap="round" stroke-linejoin="round"/><path d="M10.3 13.6 V23.3 M25.8 16 C25.8 19 24 20 21 20 H10.3" stroke="#6b6651" stroke-width="2.2" fill="none" stroke-linecap="round" stroke-linejoin="round"/></svg>
<svg class="s" style="left:2984px;top:152px;" width="32" height="34" viewBox="0 0 32 34"><path d="M10 7 H14.5 A3 3 0 0 1 20.5 7 H25 A2.5 2.5 0 0 1 27.5 9.5 V15 A3 3 0 0 0 27.5 21 V27 A2.5 2.5 0 0 1 25 29.5 H20.5 A3 3 0 0 1 14.5 29.5 H10 A2.5 2.5 0 0 1 7.5 27 V21 A3 3 0 0 1 7.5 15 V9.5 A2.5 2.5 0 0 1 10 7 Z" stroke="#6b6651" stroke-width="2.2" fill="none" stroke-linecap="round" stroke-linejoin="round"/></svg>
<svg class="s" style="left:3052px;top:162px;" width="24" height="15" viewBox="0 0 24 15"><path d="M3 3 L12 12 L21 3" stroke="#6b6651" stroke-width="2" fill="none" stroke-linecap="round" stroke-linejoin="round"/></svg>
<svg class="s" style="left:2690px;top:219.5px;" width="24" height="14.5" viewBox="0 0 24 14.5"><path d="M2 2 L12.0 12.5 L22 2" stroke="#1f1f1f" stroke-width="2" fill="none" stroke-linecap="round" stroke-linejoin="round"/></svg>
<div class="t" style="left:2723.0px;top:215.3px;font-size:22.3px;line-height:22.3px;color:#1f1f1f;font-weight:700;">TEMPLATE</div>
<svg class="s" style="left:2695px;top:1728px;" width="15" height="24" viewBox="0 0 15 24"><path d="M2 2 L13 12.0 L2 22" stroke="#1f1f1f" stroke-width="2" fill="none" stroke-linecap="round" stroke-linejoin="round"/></svg>
<div class="t" style="left:2723.0px;top:1731.1px;font-size:22.3px;line-height:22.3px;color:#1f1f1f;font-weight:700;">OUTLINE</div>
<svg class="s" style="left:2695px;top:1772px;" width="15" height="24" viewBox="0 0 15 24"><path d="M2 2 L13 12.0 L2 22" stroke="#1f1f1f" stroke-width="2" fill="none" stroke-linecap="round" stroke-linejoin="round"/></svg>
<div class="t" style="left:2723.0px;top:1775.1px;font-size:22.3px;line-height:22.3px;color:#1f1f1f;font-weight:700;">TIMELINE</div>
<div class="r" style="left:2682px;top:776px;width:507px;height:44px;background:#dedcd0;"></div>
<div class="r" style="left:2722px;top:336px;width:2px;height:1012px;background:#e6e3d8;"></div>
<svg class="s" style="left:2721.5px;top:258.3px;" width="14.5" height="23.5" viewBox="0 0 14.5 23.5"><path d="M2 2 L12.5 11.75 L2 21.5" stroke="#1f1f1f" stroke-width="2" fill="none" stroke-linecap="round" stroke-linejoin="round"/></svg>
<div class="t" style="left:2751.5px;top:257.4px;font-size:27px;line-height:27px;color:#1f1f1f;">.github</div>
<svg class="s" style="left:2716px;top:307.4px;" width="23.7" height="15" viewBox="0 0 23.7 15"><path d="M2 2 L11.85 13 L21.7 2" stroke="#1f1f1f" stroke-width="2" fill="none" stroke-linecap="round" stroke-linejoin="round"/></svg>
<div class="t" style="left:2751.5px;top:301.4px;font-size:27px;line-height:27px;color:#a34d14;transform:scaleX(0.975);transform-origin:0 0;">sample</div>
<div class="r" style="left:3144px;top:307px;width:14px;height:14px;border-radius:50%;background:#d49a8e"></div>
<svg class="s" style="left:2731px;top:347px;" width="22" height="22" viewBox="0 0 22 22"><path d="M17.5 5.5 A7.8 8.5 0 1 0 17.5 16.5" stroke="#4a8db0" stroke-width="4.2" fill="none"/></svg>
<div class="t" style="left:2767.0px;top:345.4px;font-size:27px;line-height:27px;color:#1f1f1f;">dracula.c</div>
<svg class="s" style="left:2731px;top:391px;" width="26" height="22" viewBox="0 0 26 22"><path d="M15 5.5 A7.8 8.5 0 1 0 15 16.5" stroke="#4a8db0" stroke-width="4.2" fill="none"/><path d="M10 11 H16 M13 8 V14 M17 11 H23 M20 8 V14" stroke="#4a8db0" stroke-width="2"/></svg>
<div class="t" style="left:2767.0px;top:389.4px;font-size:27px;line-height:27px;color:#1f1f1f;">dracula.c++</div>
<svg class="s" style="left:2731px;top:435px;" width="24" height="24" viewBox="0 0 24 24"><circle cx="12" cy="12" r="10" fill="#7fb35a"/><circle cx="12" cy="12" r="6" fill="#cfccc0"/><path d="M8 16 C10 12 12 9 16 8" stroke="#7fb35a" stroke-width="2.5" fill="none"/></svg>
<div class="t" style="left:2767.0px;top:433.4px;font-size:27px;line-height:27px;color:#1f1f1f;">dracula.clj</div>
<svg class="s" style="left:2731px;top:479px;" width="26" height="22" viewBox="0 0 26 22"><path d="M15 5.5 A7.8 8.5 0 1 0 15 16.5" stroke="#4a8db0" stroke-width="4.2" fill="none"/><path d="M17 8 H24 M17 12 H24 M19 5 L18.5 15 M22.5 5 L22 15" stroke="#4a8db0" stroke-width="1.6"/></svg>
<div class="t" style="left:2767.0px;top:477.4px;font-size:27px;line-height:27px;color:#1f1f1f;">dracula.cs</div>
<svg class="s" style="left:2731px;top:523px;" width="22" height="22" viewBox="0 0 22 22"><path d="M8 3 L6 19 M15 3 L13 19 M3 8 H19 M2.5 14 H18.5" stroke="#4a8db0" stroke-width="2.8"/></svg>
<div class="t" style="left:2767.0px;top:521.4px;font-size:27px;line-height:27px;color:#1f1f1f;">dracula.css</div>
<svg class="s" style="left:2731px;top:567px;" width="24" height="24" viewBox="0 0 24 24"><path d="M7 2 L15 2 L22 9 V17 L17 22 H8 L2 16 V8 Z" fill="#4a8db0"/><path d="M2 16 L8 22 H17 L7 12 Z" fill="#e3e0d4"/></svg>
<div class="t" style="left:2767.0px;top:565.4px;font-size:27px;line-height:27px;color:#1f1f1f;">dracula.dart</div>
<svg class="s" style="left:2731px;top:611px;" width="20" height="24" viewBox="0 0 20 24"><path d="M10 2 C14 7 17 11 17 15.5 A7 7 0 0 1 3 15.5 C3 10 7 5 10 2 Z" fill="#8a6cc9"/></svg>
<div class="t" style="left:2767.0px;top:609.4px;font-size:27px;line-height:27px;color:#1f1f1f;">dracula.ex</div>
<svg class="s" style="left:2725px;top:655px;" width="32" height="22" viewBox="0 0 32 22"><path d="M1 9 H6 M2 12 H6" stroke="#4a8db0" stroke-width="1.3"/><text x="7" y="17" font-family="Liberation Sans" font-weight="700" font-style="italic" font-size="15" fill="#4a8db0">GO</text></svg>
<div class="t" style="left:2767.0px;top:653.4px;font-size:27px;line-height:27px;color:#1f1f1f;">dracula.go</div>
<svg class="s" style="left:2731px;top:699px;" width="22" height="22" viewBox="0 0 22 22"><path d="M8 5 L3 11 L8 17 M14 5 L19 11 L14 17" stroke="#d4604a" stroke-width="2.4" fill="none" stroke-linecap="round" stroke-linejoin="round"/></svg>
<div class="t" style="left:2767.0px;top:697.4px;font-size:27px;line-height:27px;color:#1f1f1f;">dracula.html</div>
<svg class="s" style="left:2731px;top:743px;" width="22" height="24" viewBox="0 0 22 24"><path d="M15 2 V15 A5.5 5.5 0 0 1 4.5 17.5" stroke="#c22e4a" stroke-width="3.6" fill="none"/></svg>
<div class="t" style="left:2767.0px;top:741.4px;font-size:27px;line-height:27px;color:#1f1f1f;">dracula.java</div>
<div class="t" style="left:2731.5px;top:788.1px;font-size:18px;line-height:18px;font-weight:700;color:#d1b33a;letter-spacing:0px;transform:scale(0.86,1.1);transform-origin:0 0">JS</div>
<div class="t" style="left:2767.0px;top:785.4px;font-size:27px;line-height:27px;color:#a34d14;">dracula.js</div>
<svg class="s" style="left:2731px;top:831px;" width="22" height="22" viewBox="0 0 22 22"><path d="M2 2 H20 L11 11 L20 20 H2 Z" fill="#e06a4e"/><path d="M2 2 H11 L2 11 Z" fill="#e88a70"/></svg>
<div class="t" style="left:2767.0px;top:829.4px;font-size:27px;line-height:27px;color:#1f1f1f;">dracula.kt</div>
<svg class="s" style="left:2731px;top:875px;" width="22" height="24" viewBox="0 0 22 24"><path d="M6 2 H16 V10 H21 L11 21 L1 10 H6 Z" fill="#4a8db0"/></svg>
<div class="t" style="left:2767.0px;top:873.4px;font-size:27px;line-height:27px;color:#1f1f1f;">dracula.md</div>
<svg class="s" style="left:2729px;top:919px;" width="28" height="22" viewBox="0 0 28 22"><path d="M4 9 C4 4 9 3 13 4 C15 2 19 2 21 4 C25 5 26 9 25 13 V17 H22 V14 H19 V17 H16 V14 H11 V17 H8 V14 C5 14 4 12 4 9 Z" fill="#8a6cc9"/><path d="M3 9 C1 11 2 14 3 15" stroke="#8a6cc9" stroke-width="1.8" fill="none"/></svg>
<div class="t" style="left:2767.0px;top:917.4px;font-size:27px;line-height:27px;color:#1f1f1f;">dracula.php</div>
<svg class="s" style="left:2731px;top:963px;" width="22" height="22" viewBox="0 0 22 22"><path d="M11 2 C6 2 6 4 6 6 V8 H12 V9 H4 C2 9 2 11 2 13 C2 16 3 17 5 17 H7 V14 C7 12 8 11 10 11 H14 C16 11 16 10 16 8 V5 C16 3 14 2 11 2 Z" fill="#4a8db0"/><path d="M11 20 C16 20 16 18 16 16 V14 H10 V13 H18 C20 13 20 11 20 9 C20 6 19 5 17 5 H15 V8 C15 10 14 11 12 11 H8 C6 11 6 12 6 14 V17 C6 19 8 20 11 20 Z" fill="#4a8db0" opacity="0.85"/></svg>
<div class="t" style="left:2767.0px;top:961.4px;font-size:27px;line-height:27px;color:#1f1f1f;">dracula.py</div>
<svg class="s" style="left:2731px;top:1007px;" width="22" height="22" viewBox="0 0 22 22"><path d="M3 20 V10 C3 5 7 2 12 2 H19 V20 Z" fill="#c22e4a"/></svg>
<div class="t" style="left:2767.0px;top:1005.4px;font-size:27px;line-height:27px;color:#1f1f1f;">dracula.rb</div>
<svg class="s" style="left:2731px;top:1051px;" width="24" height="24" viewBox="0 0 24 24"><circle cx="12" cy="12" r="9.5" stroke="#77746a" stroke-width="2.6" fill="none" stroke-dasharray="2.2 1.2"/><circle cx="12" cy="12" r="6.5" stroke="#77746a" stroke-width="1.6" fill="none"/><text x="7.5" y="16.5" font-family="Liberation Sans" font-weight="700" font-size="11" fill="#77746a">R</text></svg>
<div class="t" style="left:2767.0px;top:1049.4px;font-size:27px;line-height:27px;color:#1f1f1f;">dracula.rs</div>
<svg class="s" style="left:2731px;top:1095px;" width="22" height="24" viewBox="0 0 22 24"><path d="M4 4 L18 2 V6 L4 8 Z M4 11 L18 9 V13 L4 15 Z M4 18 L18 16 V20 L4 22 Z" fill="#c22e4a"/></svg>
<div class="t" style="left:2767.0px;top:1093.4px;font-size:27px;line-height:27px;color:#1f1f1f;">dracula.scala</div>
<svg class="s" style="left:2731px;top:1139px;" width="22" height="22" viewBox="0 0 22 22"><path d="M4 5 H18 M4 9 H18 M4 13 H18 M4 17 H14" stroke="#dcd9ce" stroke-width="1.6"/></svg>
<div class="t" style="left:2767.0px;top:1137.4px;font-size:27px;line-height:27px;color:#1f1f1f;">dracula.sml</div>
<svg class="s" style="left:2731px;top:1183px;" width="24" height="22" viewBox="0 0 24 22"><path d="M2 12 C6 15 12 17 16 15 C18 17 20 18 22 18 C21 16 21 14 21 13 C22 9 19 5 14 2 C17 6 17 9 16 11 C12 9 7 5 5 3 C7 6 10 9 12 11 C9 10 5 8 3 6 C5 9 8 11 10 13 C7 14 4 13 2 12 Z" fill="#e0674a"/></svg>
<div class="t" style="left:2767.0px;top:1181.4px;font-size:27px;line-height:27px;color:#1f1f1f;">dracula.swift</div>
<div class="t" style="left:2730px;top:1228px;font-size:18px;line-height:18px;font-weight:700;color:#4a8db0;letter-spacing:-0.5px">TS</div>
<div class="t" style="left:2767.0px;top:1225.4px;font-size:27px;line-height:27px;color:#1f1f1f;">dracula.ts</div>
<svg class="s" style="left:2731px;top:1271px;" width="22" height="24" viewBox="0 0 22 24"><path d="M12 2 H16 L13 15 H10 Z" fill="#8a6cc9"/><circle cx="10.5" cy="19.5" r="2.2" fill="#8a6cc9"/></svg>
<div class="t" style="left:2767.0px;top:1269.4px;font-size:27px;line-height:27px;color:#1f1f1f;transform:scaleX(0.977);transform-origin:0 0;">Dracula.yml</div>
<svg class="s" style="left:2731px;top:1315px;" width="22" height="24" viewBox="0 0 22 24"><path d="M6 2 H16 V10 H21 L11 21 L1 10 H6 Z" fill="#4a8db0"/></svg>
<div class="t" style="left:2767.0px;top:1313.4px;font-size:27px;line-height:27px;color:#1f1f1f;transform:scaleX(0.951);transform-origin:0 0;">SAMPLE.md</div>
<div class="t" style="left:3142.5px;top:787.0px;font-size:24px;line-height:24px;color:#cf5a3b;font-weight:700;transform:scaleX(0.89);transform-origin:0 0;">M</div>
<svg class="s" style="left:2714px;top:1359px;" width="22" height="24" viewBox="0 0 22 24"><path d="M6 2 H16 V10 H21 L11 21 L1 10 H6 Z" fill="#4a8db0"/></svg>
<div class="t" style="left:2751.5px;top:1357.4px;font-size:27px;line-height:27px;color:#1f1f1f;transform:scaleX(0.943);transform-origin:0 0;">CONTRIBUTORS.md</div>
<svg class="s" style="left:2714px;top:1403px;" width="22" height="24" viewBox="0 0 22 24"><path d="M6 2 H16 V10 H21 L11 21 L1 10 H6 Z" fill="#4a8db0"/></svg>
<div class="t" style="left:2751.5px;top:1401.4px;font-size:27px;line-height:27px;color:#1f1f1f;transform:scaleX(0.959);transform-origin:0 0;">INSTALL.md</div>
<svg class="s" style="left:2714px;top:1447px;" width="22" height="26" viewBox="0 0 22 26"><circle cx="10" cy="6" r="4" stroke="#d4b83c" stroke-width="2.4" fill="none"/><path d="M8 9 L5 24 L9 22 M12 9 L15 24 L18 21" stroke="#d4b83c" stroke-width="2.6" fill="none"/></svg>
<div class="t" style="left:2751.5px;top:1445.4px;font-size:27px;line-height:27px;color:#1f1f1f;transform:scaleX(0.902);transform-origin:0 0;">LICENSE</div>
<svg class="s" style="left:2714px;top:1491px;" width="24" height="24" viewBox="0 0 24 24"><circle cx="12" cy="12" r="10" stroke="#4a8db0" stroke-width="2" fill="none"/><circle cx="12" cy="7" r="1.6" fill="#4a8db0"/><path d="M9.5 10.5 H12.5 V17.5 M9 17.5 H15.5" stroke="#4a8db0" stroke-width="2" fill="none"/></svg>
<div class="t" style="left:2751.5px;top:1489.4px;font-size:27px;line-height:27px;color:#1f1f1f;transform:scaleX(0.935);transform-origin:0 0;">README.md</div>
<svg class="s" style="left:2714px;top:1535px;" width="26" height="22" viewBox="0 0 26 22"><path d="M2 1 V10" stroke="#9a8ed6" stroke-width="1.5"/><rect x="5" y="3" width="19" height="18" stroke="#8a6cc9" stroke-width="1.8" fill="none"/><circle cx="18" cy="8" r="2" fill="#8a6cc9"/><path d="M6 20 L12 12 L16 17 L19 14 L23 20 Z" fill="#8a6cc9"/></svg>
<div class="t" style="left:2751.5px;top:1533.4px;font-size:27px;line-height:27px;color:#1f1f1f;">screenshot.png</div>
<div class="r" style="left:112px;top:1806px;width:3078px;height:42px;background:#cfccc0;"></div>
<div class="r" style="left:112px;top:1846px;width:3078px;height:2px;background:#c9c6b6;"></div>
<div class="r" style="left:113px;top:1806px;width:69px;height:40px;background:#644ac9;"></div>
<svg class="s" style="left:130px;top:1810px;" width="34" height="34" viewBox="0 0 34 34"><path d="M7.6 12.2 L15.7 19.8 L7.6 27.6 M28.3 7.7 L19.7 15.5 L28.3 23.5" stroke="#fffbeb" stroke-width="2.2" fill="none" stroke-linecap="round" stroke-linejoin="round"/></svg>
<svg class="s" style="left:199px;top:1814px;" width="28" height="22" viewBox="0 0 28 22"><path d="M8 18.5 H20.5 A5 5 0 0 0 21 8.6 A7 7 0 0 0 7.5 10 A4.3 4.3 0 0 0 8 18.5 Z" stroke="#1f1f1f" stroke-width="2" fill="none" stroke-linecap="round" stroke-linejoin="round"/></svg>
<div class="t" style="left:234.0px;top:1815.7px;font-size:25.2px;line-height:25.2px;color:#1f1f1f;">Background Agents</div>
<svg class="s" style="left:476px;top:1806px;" width="34" height="40" viewBox="0 0 34 40"><circle cx="12.6" cy="12.7" r="3.9" stroke="#1f1f1f" stroke-width="2" fill="none" stroke-linecap="round" stroke-linejoin="round"/><circle cx="12.6" cy="30" r="3.9" stroke="#1f1f1f" stroke-width="2" fill="none" stroke-linecap="round" stroke-linejoin="round"/><circle cx="26.5" cy="16" r="3.9" stroke="#1f1f1f" stroke-width="2" fill="none" stroke-linecap="round" stroke-linejoin="round"/><path d="M12.6 16.6 V26.1 M26.5 19.9 C26.5 23 24.5 24 21.5 24 H12.6" stroke="#1f1f1f" stroke-width="2" fill="none" stroke-linecap="round" stroke-linejoin="round"/></svg>
<div class="t" style="left:517.0px;top:1815.8px;font-size:25px;line-height:25px;color:#1f1f1f;">main*</div>
<svg class="s" style="left:594px;top:1812px;" width="28" height="30" viewBox="0 0 28 30"><path d="M14.5 5.5 A9 9 0 0 0 10 22" stroke="#1f1f1f" stroke-width="2" fill="none" stroke-linecap="round" stroke-linejoin="round"/><path d="M11.8 3 L14.6 5.5 L11.8 8" stroke="#1f1f1f" stroke-width="2" fill="none" stroke-linecap="round" stroke-linejoin="round"/><path d="M13.5 23.5 A9 9 0 0 0 18 7" stroke="#1f1f1f" stroke-width="2" fill="none" stroke-linecap="round" stroke-linejoin="round"/><path d="M16.2 21 L13.4 23.5 L16.2 26" stroke="#1f1f1f" stroke-width="2" fill="none" stroke-linecap="round" stroke-linejoin="round"/></svg>
<svg class="s" style="left:650px;top:1813px;" width="28" height="28" viewBox="0 0 28 28"><circle cx="13.5" cy="13.5" r="10.5" stroke="#1f1f1f" stroke-width="2" fill="none" stroke-linecap="round" stroke-linejoin="round"/><path d="M9.5 9.5 L17.5 17.5 M17.5 9.5 L9.5 17.5" stroke="#1f1f1f" stroke-width="2" fill="none" stroke-linecap="round" stroke-linejoin="round"/></svg>
<div class="t" style="left:685.0px;top:1815.8px;font-size:25px;line-height:25px;color:#1f1f1f;">0</div>
<svg class="s" style="left:707px;top:1812px;" width="28" height="28" viewBox="0 0 28 28"><path d="M14 3 L25.5 23.5 H2.5 Z M14 10 V16.5" stroke="#1f1f1f" stroke-width="2" fill="none" stroke-linecap="round" stroke-linejoin="round"/><circle cx="14" cy="20" r="1.3" fill="#1f1f1f"/></svg>
<div class="t" style="left:740.0px;top:1815.8px;font-size:25px;line-height:25px;color:#1f1f1f;">0</div>
<div class="t" style="left:1711.0px;top:1815.8px;font-size:25px;line-height:25px;color:#1f1f1f;">Cursor Tab</div>
<svg class="s" style="left:1868px;top:1810px;" width="16" height="32" viewBox="0 0 16 32"><circle cx="8" cy="16" r="5" stroke="#1f1f1f" stroke-width="2" fill="none" stroke-linecap="round" stroke-linejoin="round"/><path d="M8 2 V11 M8 21 V30" stroke="#1f1f1f" stroke-width="2" fill="none" stroke-linecap="round" stroke-linejoin="round"/></svg>
<div class="t" style="left:1901.0px;top:1815.8px;font-size:25px;line-height:25px;color:#1f1f1f;">Lucas de França (1 year ago)</div>
<div class="t" style="left:2262.8px;top:1815.8px;font-size:25px;line-height:25px;color:#1f1f1f;">Ln 8, Col 38</div>
<div class="t" style="left:2433.0px;top:1816.1px;font-size:24.7px;line-height:24.7px;color:#1f1f1f;">Spaces: 2</div>
<div class="t" style="left:2576.8px;top:1815.6px;font-size:25.3px;line-height:25.3px;color:#1f1f1f;">UTF-8</div>
<div class="t" style="left:2682.0px;top:1815.8px;font-size:25px;line-height:25px;color:#1f1f1f;">LF</div>
<svg class="s" style="left:2738px;top:1815px;" width="28" height="30" viewBox="0 0 28 30"><path d="M8 3 C5 3 4.5 4.5 4.5 7 V11 C4.5 13 3.5 14 2 14.5 C3.5 15 4.5 16 4.5 18 V21 C4.5 23.5 5 25 8 25 M17 3 C20 3 20.5 4.5 20.5 7 V11" stroke="#1f1f1f" stroke-width="2" fill="none" stroke-linecap="round" stroke-linejoin="round"/><circle cx="19.5" cy="21.5" r="5" fill="#cfccc0" stroke="#1f1f1f" stroke-width="1.8"/><path d="M17.5 19.5 L21.5 23.5 M21.5 19.5 L17.5 23.5" stroke="#1f1f1f" stroke-width="1.6"/></svg>
<div class="t" style="left:2777.6px;top:1815.8px;font-size:25px;line-height:25px;color:#1f1f1f;">JavaScript</div>
<svg class="s" style="left:2921px;top:1815px;" width="32" height="30" viewBox="0 0 32 30"><rect x="5.5" y="2.5" width="10" height="10" rx="4.5" stroke="#1f1f1f" stroke-width="2.4" fill="none"/><rect x="16.5" y="2.5" width="10" height="10" rx="4.5" stroke="#1f1f1f" stroke-width="2.4" fill="none"/><path d="M2.5 19.5 C2.5 15 5 13.5 8 13.5 H24 C27 13.5 29.5 15 29.5 19.5 V21 C29.5 25.5 23.5 27.5 16 27.5 C8.5 27.5 2.5 25.5 2.5 21 Z" fill="#1f1f1f"/><rect x="11.5" y="17.5" width="2.4" height="5" rx="1" fill="#cfccc0"/><rect x="18.1" y="17.5" width="2.4" height="5" rx="1" fill="#cfccc0"/></svg>
<svg class="s" style="left:2982px;top:1817px;" width="32" height="24" viewBox="0 0 32 24"><path d="M2 12 L7 18 L18 4 M12 16 L14 18 L26 4" stroke="#1f1f1f" stroke-width="2" fill="none" stroke-linecap="round" stroke-linejoin="round"/></svg>
<div class="t" style="left:3019.0px;top:1815.6px;font-size:25.3px;line-height:25.3px;color:#1f1f1f;">Prettier</div>
<svg class="s" style="left:3134px;top:1813px;" width="30" height="32" viewBox="0 0 30 32"><path d="M14 4 A7.5 7.5 0 0 0 6.5 11.5 V19 L3.5 23 H24.5 L21.5 19 V11.5 A7.5 7.5 0 0 0 14 4 Z M11 26 A3 3 0 0 0 17 26" stroke="#1f1f1f" stroke-width="2" fill="none" stroke-linecap="round" stroke-linejoin="round"/><circle cx="21" cy="7.5" r="6.8" fill="#cfccc0"/><circle cx="21" cy="7.5" r="4.8" fill="#1f1f1f"/></svg>
<svg class="s" style="left:2975px;top:91px;" width="32" height="28" viewBox="0 0 32 28"><rect x="2.5" y="2.5" width="26" height="22.5" rx="4" stroke="#1f1f1f" stroke-width="2.4" fill="none" stroke-linejoin="round"/><path d="M2.5 18 H28.5" stroke="#1f1f1f" stroke-width="2.4" fill="none" stroke-linejoin="round"/></svg>
<svg class="s" style="left:3026px;top:91px;" width="32" height="28" viewBox="0 0 32 28"><rect x="2.5" y="2.5" width="26" height="22.5" rx="4" stroke="#1f1f1f" stroke-width="2.4" fill="none" stroke-linejoin="round"/><path d="M19 2.5 H24.5 A4 4 0 0 1 28.5 6.5 V21 A4 4 0 0 1 24.5 25 H19 Z" fill="#1f1f1f"/></svg>
<svg class="s" style="left:3078px;top:91px;" width="32" height="28" viewBox="0 0 32 28"><rect x="2.5" y="2.5" width="26" height="22.5" rx="4" stroke="#1f1f1f" stroke-width="2.4" fill="none" stroke-linejoin="round"/><path d="M12 2.5 H6.5 A4 4 0 0 0 2.5 6.5 V21 A4 4 0 0 0 6.5 25 H12 Z" fill="#1f1f1f"/></svg>
<svg class="s" style="left:3129.5px;top:89px;" width="32" height="32" viewBox="0 0 32 32"><polygon points="13.76,4.72 16.00,1.00 18.93,1.29 20.40,5.38 22.39,6.44 26.61,5.39 28.47,7.67 26.62,11.60 27.28,13.76 31.00,16.00 30.71,18.93 26.62,20.40 25.56,22.39 26.61,26.61 24.33,28.47 20.40,26.62 18.24,27.28 16.00,31.00 13.07,30.71 11.60,26.62 9.61,25.56 5.39,26.61 3.53,24.33 5.38,20.40 4.72,18.24 1.00,16.00 1.29,13.07 5.38,11.60 6.44,9.61 5.39,5.39 7.67,3.53 11.60,5.38" stroke="#1f1f1f" stroke-width="2.4" fill="none" stroke-linejoin="round"/><circle cx="16" cy="16" r="4.2" stroke="#1f1f1f" stroke-width="2.4" fill="none"/></svg>
<svg class="s" style="left:112px;top:76px;transform:rotate(0deg);transform-origin:8.5px 8.5px" width="17" height="17" viewBox="0 0 17 17"><path d="M0 0 H17 A17 17 0 0 0 0 17 Z" fill="#000"/></svg>
<svg class="s" style="left:3173px;top:76px;transform:rotate(90deg);transform-origin:8.5px 8.5px" width="17" height="17" viewBox="0 0 17 17"><path d="M0 0 H17 A17 17 0 0 0 0 17 Z" fill="#000"/></svg>
<svg class="s" style="left:3173px;top:1831px;transform:rotate(180deg);transform-origin:8.5px 8.5px" width="17" height="17" viewBox="0 0 17 17"><path d="M0 0 H17 A17 17 0 0 0 0 17 Z" fill="#000"/></svg>
<svg class="s" style="left:112px;top:1831px;transform:rotate(270deg);transform-origin:8.5px 8.5px" width="17" height="17" viewBox="0 0 17 17"><path d="M0 0 H17 A17 17 0 0 0 0 17 Z" fill="#000"/></svg>
<div class="r" style="left:112px;top:76px;width:3074px;height:1768px;border:2px solid #c9c6b6;border-radius:17px;"></div>
</body></html>
